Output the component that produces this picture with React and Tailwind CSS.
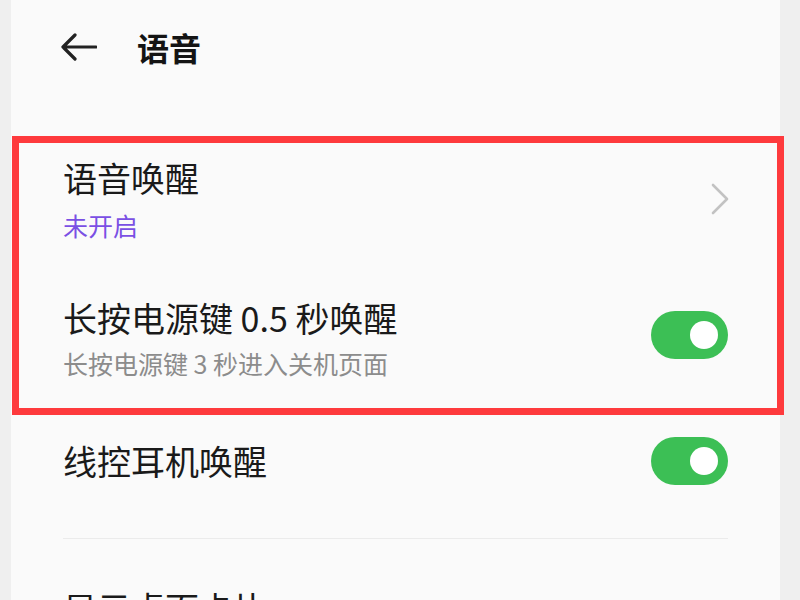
import React from "react";

const font = "font-['Noto_Sans_CJK_SC','Noto_Sans',sans-serif]";

export default function App() {
  return (
    <div className={`relative flex h-[600px] w-[800px] overflow-hidden bg-[#efefef] ${font}`}>
      <div className="w-[11px] shrink-0" />

      <main className="w-[769px] shrink-0 bg-[#fafafa] px-[52px]">
        {/* 顶栏 */}
        <header className="flex h-[94px] items-center">
          <svg width="37" height="28" viewBox="0 0 37 28" className="-ml-[3px] mr-[40px]">
            <path
              d="M36 14H3M15 2L3 14L15 26"
              fill="none"
              stroke="#222"
              strokeWidth="3.2"
              strokeLinecap="round"
              strokeLinejoin="round"
            />
          </svg>
          <h1 className="text-[32px] font-bold leading-[40px] text-[#141414]">语音</h1>
        </header>

        {/* 语音唤醒 */}
        <div className="mt-[64px] flex items-center justify-between">
          <div>
            <p className="text-[34px] leading-[40px] text-[#1a1a1a]">语音唤醒</p>
            <p className="mt-[11px] text-[25px] leading-[32px] text-[#7a50e4]">未开启</p>
          </div>
          <svg width="18" height="32" viewBox="0 0 18 32" className="-mt-[2px] mr-[-1px]">
            <path
              d="M2 2L16 16L2 30"
              fill="none"
              stroke="#c2c2c2"
              strokeWidth="2.6"
              strokeLinecap="round"
              strokeLinejoin="round"
            />
          </svg>
        </div>

        {/* 长按电源键 */}
        <div className="mt-[57px] flex items-center justify-between">
          <div>
            <p className="text-[34px] leading-[40px] text-[#1a1a1a]">长按电源键 0.5 秒唤醒</p>
            <p className="mt-[9px] text-[25px] leading-[32px] text-[#8c8c8c]">
              长按电源键 3 秒进入关机页面
            </p>
          </div>
          <Toggle className="-mt-[7px]" />
        </div>

        {/* 线控耳机唤醒 */}
        <div className="mt-[58px] flex items-center justify-between">
          <p className="text-[34px] leading-[40px] text-[#1a1a1a]">线控耳机唤醒</p>
          <Toggle />
        </div>

        <div className="mt-[53px] h-px bg-[#ebebeb]" />

        <p className="mt-[49px] text-[34px] leading-[40px] text-[#1a1a1a]">显示桌面卡片</p>
      </main>

      <div className="flex-1" />

      {/* 标注框 */}
      <div className="pointer-events-none absolute left-[12px] top-[136px] h-[279px] w-[772px] border-[7px] border-[#fe3a3d]" />
    </div>
  );
}

function Toggle({ className = "" }) {
  return (
    <div
      className={`flex h-[48px] w-[77px] shrink-0 items-center justify-end rounded-full bg-[#3cbf55] pr-[10px] ${className}`}
    >
      <div className="h-[28px] w-[28px] rounded-full bg-white" />
    </div>
  );
}
